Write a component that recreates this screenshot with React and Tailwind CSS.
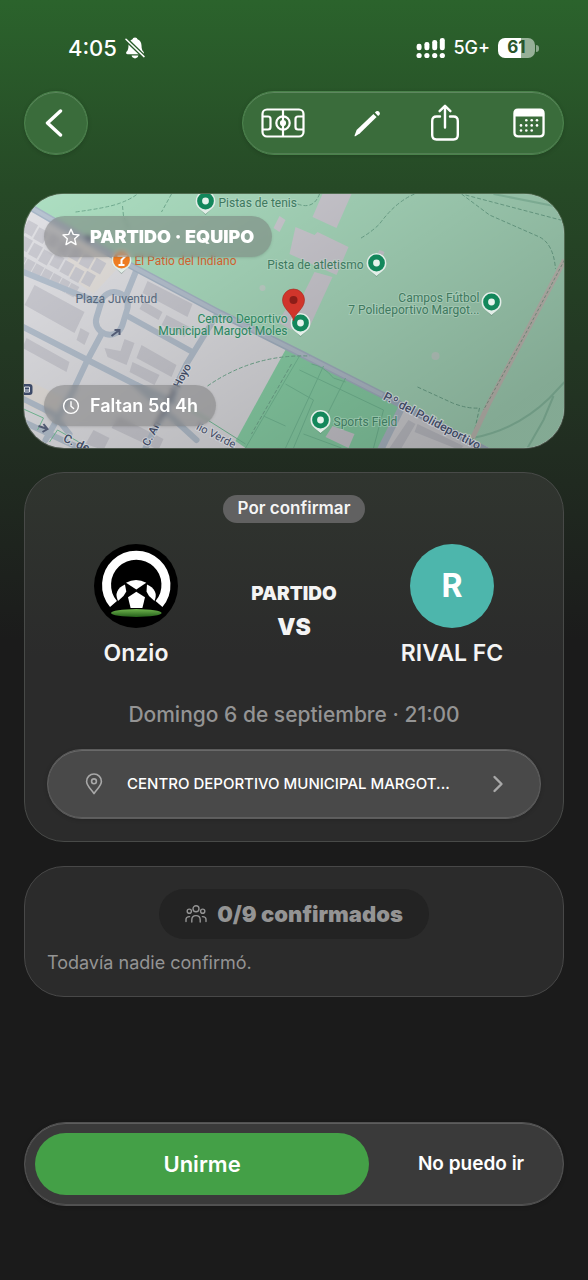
const GLASS = 'border shadow-[inset_0_1px_0_rgba(255,255,255,0.18),inset_0_-1px_0_rgba(255,255,255,0.12),0_1px_4px_rgba(0,0,0,0.16)]'

const ROADS = [
  'M0 78L56 101L76 108',
  'M113 76L102 103',
  'M78 140L64 166L49 198L22 246',
  'M-2 132L64 166L113 191L173 246',
  'M104 122L169 158',
  'M195 118L163 170L122 254',
  'M-2 204L30 220L46 240',
  'M-2 227L60 256',
  'M113 191L150 208',
]

const BUILDINGS = [
  '11,91 61,118 51,139 1,111',
  '124,87 169,110 164,123 119,99',
  '120,107 139,118 135,126 116,115',
  '143,121 166,133 161,143 138,131',
  '81,154 97,157 101,145 111,149 103,171 84,163',
  '118,151 153,171 148,183 113,164',
  '109,168 136,181 131,191 106,178',
  '3,144 46,168 43,178 -1,154',
  '57,134 66,139 61,151 53,146',
  '95,222 140,245 135,256 88,234',
  '70,236 86,244 80,256 62,250',
]

const BLOCKS = [0, 1, 2, 3, 4, 5, 6]

const PLACES = [
  { pin: [182, 7], x: 195, y: 13, anchor: 'start', lines: ['Pistas de tenis'] },
  { pin: [353, 69], x: 340, y: 75, anchor: 'end', lines: ['Pista de atletismo'] },
  { pin: [468, 108], x: 456, y: 108, anchor: 'end', lines: ['Campos Fútbol', '7 Polideportivo Margot...'] },
  { pin: [277, 129], x: 264, y: 129, anchor: 'end', lines: ['Centro Deportivo', 'Municipal Margot Moles'], strong: true },
  { pin: [297, 226], x: 310, y: 232, anchor: 'start', lines: ['Sports Field'] },
]

const DAYS = [[13.3, 12.3], [18.7, 12.3], [24, 12.3], [8, 17.4], [13.3, 17.4], [18.7, 17.4], [24, 17.4], [8, 22.5], [13.3, 22.5], [18.7, 22.5]]

function Pin({ x, y, color }) {
  return (
    <g transform={`translate(${x} ${y})`}>
      <path d="M0 14L-6 8A10 10 0 1 1 6 8Z" fill="#4b6b5c" opacity="0.4" />
      <path d="M0 13L-6 8A10 10 0 1 1 6 8Z" fill="#e3eee8" />
      <circle r="8.4" fill={color} />
    </g>
  )
}

function MapView() {
  return (
    <svg viewBox="0 0 541 254" preserveAspectRatio="xMidYMid slice" className="block h-[254px] w-full" role="img" aria-label="Mapa">
      <defs>
        <linearGradient id="shade" x1="0" y1="0" x2="1" y2="0.7">
          <stop offset="0" stopColor="#000" stopOpacity="0" />
          <stop offset="1" stopColor="#000" stopOpacity="0.24" />
        </linearGradient>
      </defs>
      <rect width="541" height="254" fill="#e2e2e6" />
      <path d="M60 20L85 60L100 68L70 100L40 78ZM0 184L40 204L30 224L0 210Z" fill="#e9e2d8" opacity="0.6" />

      {/* zona verde */}
      <path d="M0 12V0H541V254H466L359 201L276 157L196 117L106 69L9 14Z" fill="#addfc2" />
      <path d="M263 154L212 247L222 254H358L379 214L276 160Z" fill="#8ed8ad" />
      <g fill="#d3d1d8">
        <polygon points="299,0 328,0 313,34 289,23" />
        <polygon points="272,33 291,41 294,38 325,53 313,81 266,60" />
        <polygon points="291,78 309,83 286,133 268,124" />
        <polygon points="256,22 262,26 256,38 250,34" />
        <polygon points="358,66 361,58 356,56 350,67" />
        <polygon points="262,116 276,122 268,136 254,128" />
        <polygon points="309,232 331,240 325,254 302,243" />
      </g>
      <g fill="#c6d8cf">
        <circle cx="412" cy="162" r="4" />
        <circle cx="239" cy="94" r="3" />
      </g>
      <path d="M379 216L450 254H358Z" fill="#dcdce0" />
      <path d="M385 226L392 230L378 254H366ZM394 230L440 252L436 256L391 238Z" fill="#c9cad1" />

      {/* edificios */}
      <g fill="#cdcdd4">
        {BUILDINGS.map((points) => (
          <polygon key={points} points={points} />
        ))}
        <g transform="translate(5 26) rotate(29)">
          {BLOCKS.map((i) => (
            <rect key={i} x={i * 13} y={i % 2} width="11" height="13" />
          ))}
          {BLOCKS.map((i) => (
            <rect key={i} x={i * 12 + 4} y={16 + (i % 3)} width="10" height="13" />
          ))}
          {BLOCKS.map((i) => (
            <rect key={i} x={i * 10 + 8} y={34} width="9" height="12" />
          ))}
        </g>
      </g>

      {/* calles */}
      <g fill="none" stroke="#b7c3d1" strokeWidth="6" strokeLinejoin="round" strokeLinecap="round">
        {ROADS.map((d) => (
          <path key={d} d={d} />
        ))}
        <rect x="75" y="98" width="27" height="43" rx="13" transform="rotate(17 89 119)" />
        <path d="M-2 8L106 71L196 119L276 159L359 201L466 258" stroke="#a9b8c9" strokeWidth="7" />
        <path d="M378 214L356 258" strokeWidth="7" />
      </g>
      <path d="M-2 8L106 71L196 119L276 159L359 201" fill="none" stroke="#b9c5d3" strokeWidth="4" />

      {/* senderos y pistas */}
      <g fill="none" stroke="#79c39c" strokeWidth="1">
        <path d="M276 162L222 254M300 172L262 254M322 184L296 236M276 176L360 216L350 254M262 190L290 206M290 206L270 254M280 240L318 254M240 222L262 232M162 212L222 250M0 215L20 224L14 236M26 248L34 236L66 254" />
        <path d="M288 170Q300 172 310 184L322 188" />
      </g>
      <path d="M449 244Q493 236 526 204L541 188M504 254L520 226L530 202M470 0L541 14" fill="none" stroke="#86bfa2" strokeWidth="2" opacity="0.7" />
      <g fill="none" stroke="#74ae93" strokeWidth="1" strokeDasharray="4 2">
        <path d="M391 0Q372 8 356 30Q348 38 336 45" />
        <path d="M438 0L466 21L516 43Q530 50 532 75" />
        <path d="M442 1L541 27" />
        <path d="M394 193L429 209Q444 215 456 214L449 246" />
        <path d="M52 18Q82 14 94 10T114 0M99 12L100 22L106 36" />
        <path d="M184 192Q230 160 286 162" />
        <path d="M148 0L138 18M274 10Q290 16 296 0" />
        <path d="M268 170L228 240" />
      </g>
      <path d="M541 66L504 136L466 208L449 244" fill="none" stroke="#ccc8c0" strokeWidth="5" />
      <path d="M541 66L504 136L460 216" fill="none" stroke="#8ba693" strokeWidth="1" strokeDasharray="3 2" />
      <g stroke="#5b6580" strokeWidth="2" fill="none">
        <path d="M88 142L96 136M91 136H96V141" />
        <path d="M60 43L68 45M64 41L68 45L64 48" />
        <path d="M15 232L24 235M20 230L24 235L19 238" />
      </g>
      <rect width="541" height="254" fill="url(#shade)" />

      {/* etiquetas */}
      <g fontFamily="Roboto, sans-serif" fontSize="12">
        <Pin x={98} y={66} color="#ee7d22" />
        <path d="M94 62H102L98 66V70M95 71H101" fill="none" stroke="#fff" strokeWidth="2" />
        <text x="111" y="71" fill="#d0622f">El Patio del Indiano</text>
        <text x="52" y="109" fill="#56687c">Plaza Juventud</text>
        {PLACES.map((place) => (
          <g key={place.lines[0]}>
            <Pin x={place.pin[0]} y={place.pin[1]} color="#13875b" />
            <circle cx={place.pin[0]} cy={place.pin[1]} r="3.4" fill="#e6f3ec" />
            {place.lines.map((line, i) => (
              <text
                key={line}
                x={place.x}
                y={place.y + i * 12}
                textAnchor={place.anchor}
                fill={place.strong ? '#2c8560' : '#40795f'}
                stroke="#c3dfd0"
                strokeWidth="2"
                strokeOpacity="0.4"
                paintOrder="stroke"
              >
                {line}
              </text>
            ))}
          </g>
        ))}
        <g fill="#3f4961" stroke="#d5d8de" strokeWidth="2" strokeOpacity="0.7" paintOrder="stroke" fontWeight="500">
          <text transform="translate(359 205) rotate(28)">P.º del Polideportivo</text>
          <text transform="translate(125 253) rotate(-62)" fontSize="11">C. Arroyo del Hoyo</text>
          <text transform="translate(39 247) rotate(25)">C. de</text>
          <text transform="translate(172 235) rotate(27)" fontSize="11" fontWeight="400">lio Verde</text>
        </g>
      </g>
      <rect x="-2" y="190" width="11" height="11" rx="3" fill="#3d4a68" />
      <path d="M1 193H6V198H1ZM1 196H6" fill="none" stroke="#dfe3ea" strokeWidth="1" />
      <path d="M270 127C269 119 259 115 259 106A11 11 0 0 1 281 106C281 115 271 119 270 127Z" fill="#d0352b" stroke="#a3281f" strokeWidth="0.6" />
      <circle cx="270" cy="106" r="4" fill="#8c1d18" />
    </svg>
  )
}

function Crest() {
  return (
    <svg viewBox="0 0 84 84" className="size-[84px]" role="img" aria-label="Onzio">
      <defs>
        <linearGradient id="grass" x1="0" y1="0" x2="0" y2="1">
          <stop offset="0" stopColor="#6fb44d" />
          <stop offset="1" stopColor="#25601b" />
        </linearGradient>
      </defs>
      <circle cx="42" cy="42" r="42" fill="#000" />
      <path d="M19.5 60A29.7 29.7 0 1 1 65 60" fill="none" stroke="#fff" strokeWidth="9" />
      <g fill="#fff">
        <path d="M32 38.7Q42 33.3 52.3 38.7L42.3 45.4Z" />
        <path d="M31 40.5L32.3 47.5L29.5 52L24 57Q19 46 31 40.5Z" />
        <path d="M53 40.5L52.5 47.5L55 52L60.5 57Q65 46 53 40.5Z" />
        <path d="M42.3 47.8L51 53.2L48.4 64H36.6L34 53.2Z" />
      </g>
      <ellipse cx="42.3" cy="69" rx="25.3" ry="3.9" fill="url(#grass)" />
    </svg>
  )
}

function StatusBar() {
  return (
    <div className="flex h-6 items-center justify-between pr-[25px] pl-11 text-white">
      <div className="flex items-center gap-2">
        <span className="text-[22px] font-medium">4:05</span>
        <svg viewBox="0 0 20 22" className="h-[22px] w-5" fill="currentColor">
          <defs>
            <mask id="cut">
              <rect width="20" height="22" fill="#fff" />
              <path d="M0 1.2L20 20.6" stroke="#000" strokeWidth="4.2" />
            </mask>
          </defs>
          <g mask="url(#cut)">
            <path d="M10 0.4C11.5 0.4 12.3 1.3 12.5 2.2C15.3 3.2 16.4 5.6 16.5 8.5C16.6 12 17 13.2 18.5 14.8C19.3 15.9 18.8 17.3 17.3 17.3H2.7C1.2 17.3 0.7 15.9 1.5 14.8C3 13.2 3.4 12 3.5 8.5C3.6 5.6 4.7 3.2 7.5 2.2C7.7 1.3 8.5 0.4 10 0.4Z" />
            <path d="M6.6 18.6H13.4C13 20.4 11.7 21.4 10 21.4S7 20.4 6.6 18.6Z" />
          </g>
          <path d="M1 2.2L19 19.6" stroke="currentColor" strokeWidth="1.5" strokeLinecap="round" />
        </svg>
      </div>
      <div className="flex items-center gap-2">
        <svg viewBox="0 0 29 21" className="h-[21px] w-[29px]" fill="currentColor">
          <rect x="0.6" y="5.7" width="5" height="6.5" rx="2.3" />
          <rect x="8.4" y="4" width="5" height="8.2" rx="2.3" />
          <rect x="16.2" y="2" width="5" height="10.2" rx="2.3" />
          <rect x="23.8" y="0" width="5" height="12.2" rx="2.3" />
          <circle cx="3.1" cy="17.5" r="2.6" />
          <circle cx="10.9" cy="17.5" r="2.6" />
          <circle cx="18.7" cy="17.5" r="2.6" />
          <circle cx="26.3" cy="17.5" r="2.6" />
        </svg>
        <span className="text-lg font-medium">5G+</span>
        <div className="flex items-center gap-px">
          <div className="flex h-5 w-[37px] items-center justify-center rounded-[7px] bg-linear-to-r from-white from-62% to-[#96b097] to-62% text-[17px] font-bold text-[#28552a]">
            61
          </div>
          <div className="h-[7px] w-[3px] rounded-r-full bg-[#8aa88b]" />
        </div>
      </div>
    </div>
  )
}

function Toolbar() {
  return (
    <header className="mt-[31px] flex items-center justify-between text-white">
      <button aria-label="Volver" className={`flex size-16 items-center justify-center rounded-full border-[#4a824b] bg-[#3a6c3b] ${GLASS}`}>
        <svg viewBox="0 0 18 28" className="mr-1 h-7 w-[18px]" fill="none" stroke="currentColor" strokeWidth="3.4" strokeLinecap="round" strokeLinejoin="round">
          <path d="M15.5 2L2.5 14L15.5 26" />
        </svg>
      </button>
      <div className={`flex h-16 w-[322px] items-center justify-between rounded-full border-[#4a824b] bg-[#3a6c3b] pr-[18px] pl-[18px] ${GLASS}`}>
        <button aria-label="Alineación">
          <svg viewBox="0 0 44 30" className="h-[30px] w-11" fill="none" stroke="currentColor" strokeWidth="2.2">
            <rect x="1.5" y="1.5" width="41" height="27" rx="4.5" />
            <path d="M22 1.5V28.5M2 8.5H7Q9.5 8.5 9.5 11V19Q9.5 21.5 7 21.5H2M42 8.5H37Q34.5 8.5 34.5 11V19Q34.5 21.5 37 21.5H42" />
            <circle cx="22" cy="15" r="6.7" />
            <circle cx="22" cy="15" r="2" fill="currentColor" />
          </svg>
        </button>
        <button aria-label="Editar">
          <svg viewBox="0 0 27 27" className="size-[27px]" fill="currentColor">
            <path d="M0.6 25.4L2.6 20L19.4 3.9L22.6 7.1L6 23.3L1.4 26.2Q0.3 26.5 0.6 25.4Z" />
            <path d="M20.9 2.6L22.2 1.3A2.5 2.5 0 0 1 25.6 4.7L24.1 6Z" />
          </svg>
        </button>
        <button aria-label="Compartir" className="pr-1 pb-0.5">
          <svg viewBox="0 0 30 37" className="h-[37px] w-[30px]" fill="none" stroke="currentColor" strokeWidth="2.4" strokeLinecap="round" strokeLinejoin="round">
            <path d="M10 12.5H6.5Q2.2 12.5 2.2 17V31Q2.2 35.5 6.5 35.5H23.5Q27.8 35.5 27.8 31V17Q27.8 12.5 23.5 12.5H20" />
            <path d="M15 23.5V2M9.6 7.2L15 1.8L20.4 7.2" />
          </svg>
        </button>
        <button aria-label="Calendario">
          <svg viewBox="0 0 32 30" className="h-[30px] w-8" fill="currentColor">
            <path fillRule="evenodd" d="M5 0.5H27Q31.7 0.5 31.7 5.2V24.8Q31.7 29.5 27 29.5H5Q0.3 29.5 0.3 24.8V5.2Q0.3 0.5 5 0.5ZM2.6 8.5V24.5Q2.6 27.2 5.3 27.2H26.7Q29.4 27.2 29.4 24.5V8.5Z" />
            {DAYS.map(([x, y]) => (
              <circle key={`${x}-${y}`} cx={x} cy={y} r="1.3" />
            ))}
          </svg>
        </button>
      </div>
    </header>
  )
}

export default function App() {
  return (
    <div className="flex min-h-screen flex-col bg-[#1b1b1b] bg-[linear-gradient(180deg,#2b632c_0px,#264926_190px,#212d21_450px,#1b1b1b_640px)] px-6 pt-9 pb-[74px] font-['Inter',sans-serif]">
      <StatusBar />
      <Toolbar />

      <section className="relative mt-[39px] overflow-hidden rounded-[40px] ring-1 ring-white/20">
        <MapView />
        <div className="absolute top-[22px] left-5 flex h-[41px] items-center gap-[10px] rounded-full bg-[#6e6e6e]/45 px-[18px] text-white shadow-sm backdrop-blur-[2px]">
          <svg viewBox="0 0 18 18" className="size-[18px]" fill="none" stroke="currentColor" strokeWidth="1.4" strokeLinejoin="round">
            <path d="M9 1.2L11.3 6.4L17 7L12.7 10.8L14 16.6L9 13.6L4 16.6L5.3 10.8L1 7L6.7 6.4Z" />
          </svg>
          <span className="text-[18px] font-black">PARTIDO · EQUIPO</span>
        </div>
        <div className="absolute bottom-[22px] left-5 flex h-[41px] items-center gap-[10px] rounded-full bg-[#6e6e6e]/45 px-[18px] text-white shadow-sm backdrop-blur-[2px]">
          <svg viewBox="0 0 18 18" className="size-[18px]" fill="none" stroke="currentColor" strokeWidth="1.4" strokeLinecap="round">
            <circle cx="9" cy="9" r="7.4" />
            <path d="M9 4.6V9.2L11.6 11.6" />
          </svg>
          <span className="text-[18px] font-semibold">Faltan 5d 4h</span>
        </div>
      </section>

      <section className="mt-6 flex flex-col rounded-[40px] border border-[#484a48] bg-linear-to-b from-[#30352f] to-[#2b2b2b] to-50% px-[22px] pt-[22px] pb-[22px]">
        <span className="flex h-7 items-center self-center rounded-full bg-[#616161] px-[15px] text-[17px] font-semibold text-white/95">
          Por confirmar
        </span>
        <div className="mt-[21px] grid grid-cols-3 px-[10px] text-center text-[#f4f4f4]">
          <div className="flex flex-col items-center gap-[10px]">
            <Crest />
            <span className="text-[23px] leading-[30px] font-semibold">Onzio</span>
          </div>
          <div className="flex flex-col items-center justify-center pt-[11px]">
            <span className="text-[19px] leading-[30px] font-black">PARTIDO</span>
            <span className="text-[23px] leading-9 font-black">VS</span>
          </div>
          <div className="flex flex-col items-center gap-[10px]">
            <div className="flex size-[84px] items-center justify-center rounded-full bg-[#4db6ac] text-[32px] font-bold text-white">R</div>
            <span className="text-[23px] leading-[30px] font-semibold">RIVAL FC</span>
          </div>
        </div>
        <p className="mt-8 text-center text-[21px] leading-[30px] font-medium text-[#949494]">Domingo 6 de septiembre · 21:00</p>
        <button className={`mt-[19px] flex h-[70px] items-center rounded-full border-[#5c5c5c] bg-[#494949] pr-9 pl-[37px] text-white ${GLASS}`}>
          <svg viewBox="0 0 18 22" className="h-[22px] w-[18px] shrink-0" fill="none" stroke="#a8a8a8" strokeWidth="1.6" strokeLinejoin="round">
            <path d="M9 20.6C7 17 1.6 12.8 1.6 8.4A7.4 7.4 0 0 1 16.4 8.4C16.4 12.8 11 17 9 20.6Z" />
            <circle cx="9" cy="8.3" r="2.4" />
          </svg>
          <span className="min-w-0 flex-1 truncate pr-2 pl-6 text-left text-[15px] font-medium">CENTRO DEPORTIVO MUNICIPAL MARGOT...</span>
          <svg viewBox="0 0 12 18" className="h-[18px] w-3 shrink-0" fill="none" stroke="#a8a8a8" strokeWidth="2.4" strokeLinecap="round" strokeLinejoin="round">
            <path d="M2.5 2L9.5 9L2.5 16" />
          </svg>
        </button>
      </section>

      <section className="mt-6 flex flex-col rounded-[40px] border border-[#484848] bg-[#2b2b2b] px-[22px] pt-[22px] pb-[18px] text-[#949494]">
        <div className="flex h-[50px] items-center gap-[10px] self-center rounded-full bg-[#232323] px-[26px]">
          <svg viewBox="0 0 22 18" className="h-[18px] w-[22px]" fill="none" stroke="currentColor" strokeWidth="1.4" strokeLinecap="round">
            <circle cx="11" cy="3.8" r="3" />
            <circle cx="4.3" cy="6.2" r="2.1" />
            <circle cx="17.7" cy="6.2" r="2.1" />
            <path d="M6.8 17V15Q6.8 10.6 11 10.6T15.2 15V17M1 16.6V14.6Q1 11.6 4.6 11.6M21 16.6V14.6Q21 11.6 17.4 11.6" />
          </svg>
          <span className="text-[22px] font-black">0/9 confirmados</span>
        </div>
        <p className="mt-[9px] text-[18px] leading-[30px]">Todavía nadie confirmó.</p>
      </section>

      <div className={`mt-auto flex h-[84px] items-stretch rounded-full border-[#525252] bg-[#3a3a3a] p-[10px] ${GLASS}`}>
        <button className="w-[64.5%] rounded-full bg-[#44a047] text-[22px] font-semibold text-white">Unirme</button>
        <button className="flex-1 pl-5 text-[19px] font-semibold text-white">No puedo ir</button>
      </div>
    </div>
  )
}
